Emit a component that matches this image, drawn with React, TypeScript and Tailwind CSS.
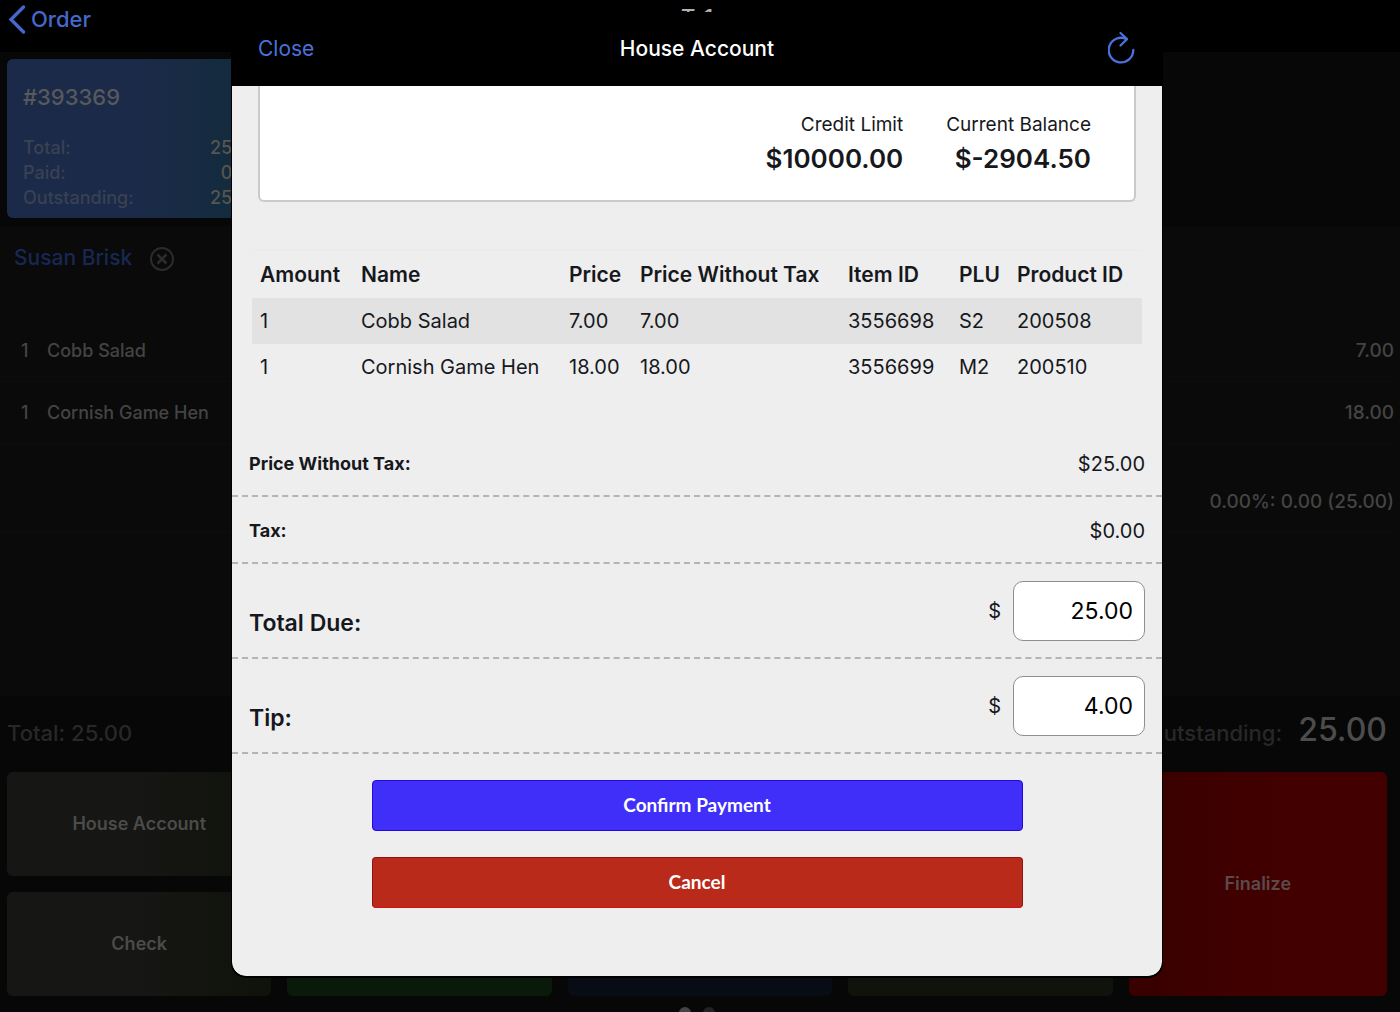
import { useState } from "react";

type OrderItem = {
  amount: number;
  name: string;
  price: string;
  priceWithoutTax: string;
  itemId: string;
  plu: string;
  productId: string;
};

const items: OrderItem[] = [
  {
    amount: 1,
    name: "Cobb Salad",
    price: "7.00",
    priceWithoutTax: "7.00",
    itemId: "3556698",
    plu: "S2",
    productId: "200508",
  },
  {
    amount: 1,
    name: "Cornish Game Hen",
    price: "18.00",
    priceWithoutTax: "18.00",
    itemId: "3556699",
    plu: "M2",
    productId: "200510",
  },
];

const card_totals = [
  { label: "Total:", value: "25.00" },
  { label: "Paid:", value: "0.00" },
  { label: "Outstanding:", value: "25.00" },
];

const columns = [
  { label: "Amount", width: "w-[101px]" },
  { label: "Name", width: "w-[208px]" },
  { label: "Price", width: "w-[71px]" },
  { label: "Price Without Tax", width: "w-[208px]" },
  { label: "Item ID", width: "w-[111px]" },
  { label: "PLU", width: "w-[58px]" },
  { label: "Product ID", width: "" },
];

const BackIcon = () => (
  <svg width="18" height="30" viewBox="0 0 18 30" fill="none" aria-hidden="true">
    <path
      d="M15.5 3 3 15.500l12.500 12.500"
      stroke="currentColor"
      strokeWidth="3.4"
      strokeLinecap="round"
      strokeLinejoin="miter"
    />
  </svg>
);

const ReloadIcon = () => (
  <svg width="28" height="36" viewBox="0 -2 28 36" fill="none" aria-hidden="true">
    <g
      stroke="currentColor"
      strokeWidth="2.3"
      strokeLinecap="round"
      strokeLinejoin="round"
    >
      <path d="M25.3 17A12.300 12.300 0 1 1 18.500 6.100" />
      <path d="M12.500 0 19 6.200 12.500 12.500" />
    </g>
  </svg>
);

const RemoveIcon = () => (
  <svg width="24" height="24" viewBox="0 0 24 24" fill="none" aria-hidden="true">
    <g stroke="currentColor" strokeWidth="2">
      <circle cx="12" cy="12" r="11" />
      <path d="m7.500 7.500 9 9m0-9-9 9" strokeWidth="2.500" />
    </g>
  </svg>
);

const OrderScreen = () => {
  return (
    <div className="min-h-screen w-full flex flex-col pr-1.5 font-medium">
      <header className="h-13 relative flex items-start justify-center">
        <a
          href="#order"
          className="absolute left-2 top-1 flex items-center gap-[5px] text-[22px] leading-[30px] text-[#4468cc]"
        >
          <BackIcon />
          Order
        </a>
        <span className="text-[22px] leading-[30px] pt-0.5 text-[#b0b0b0]">
          T-1
        </span>
      </header>

      {/* Order card */}
      <div className="bg-[#070707] h-[174px] px-[7px] pt-[7px] -mr-1.5">
        <div className="w-[264px] h-[159px] rounded-md pl-4 pr-[11px] pt-[23px] bg-linear-to-r from-[#1a2a48] from-50% to-[#112b38] text-[#3a4153]">
          <p className="text-[22px] leading-[30px] text-[#58595c]">#393369</p>
          <dl className="mt-[23px] text-lg leading-[25px]">
            {card_totals.map((item) => (
              <div key={item.label} className="flex justify-between">
                <dt>{item.label}</dt>
                <dd className="text-[#55564f]">{item.value}</dd>
              </div>
            ))}
          </dl>
        </div>
      </div>

      {/* Order lines */}
      <div className="flex-1 bg-[#0a0a0a] -mr-1.5 pr-1.5 text-[#444444] text-lg">
        <div className="h-[66px] px-3.5 flex items-center gap-[18px] border-b border-[#0c0c0c]">
          <a href="#customer" className="text-[21px] text-[#182852]">
            Susan Brisk
          </a>
          <button type="button" aria-label="Remove customer" className="text-[#2c2c2c]">
            <RemoveIcon />
          </button>
        </div>
        <ul className="pt-7">
          {items.map((item) => (
            <li
              key={item.itemId}
              className="h-[62px] flex items-center border-b border-[#0d0d0d]"
            >
              <span className="w-[47px] pl-[21px]">{item.amount}</span>
              <span className="flex-1">{item.name}</span>
              <span className="text-[19px]">{item.price}</span>
            </li>
          ))}
        </ul>
        <p className="h-[88px] pt-7 flex items-center justify-end border-b border-[#0d0d0d] text-[19px]">
          0.00%: 0.00 (25.00)
        </p>
      </div>

      {/* Totals and payment buttons */}
      <footer className="bg-[#060706] -mr-1.5 pr-[13px] pl-[7px]">
        <div className="h-[76px] pt-3.5 flex items-baseline justify-between text-[22px] text-[#282828]">
          <p>Total: 25.00</p>
          <p className="flex items-baseline gap-4">
            Outstanding:
            <span className="text-[32px] leading-10 text-[#4c4c4c]">25.00</span>
          </p>
        </div>
        <div className="grid grid-cols-[repeat(4,minmax(0,264fr))_minmax(0,258fr)] grid-rows-[104px_104px] gap-4 text-lg font-semibold text-[#4b4b4b]">
          <button type="button" className="rounded-md bg-linear-to-r from-[#161614] from-50% to-[#0f120a]">
            House Account
          </button>
          <button type="button" aria-label="Cash" className="rounded-md row-span-2 bg-[#0a1a0a]" />
          <button type="button" aria-label="Card" className="rounded-md row-span-2 bg-[#080c14]" />
          <button type="button" aria-label="Other" className="rounded-md row-span-2 bg-[#10120c]" />
          <button
            type="button"
            className="rounded-md row-span-2 bg-linear-to-r from-[#380000] to-[#420000] to-60% text-[#5c4a4a]"
          >
            Finalize
          </button>
          <button type="button" className="rounded-md bg-linear-to-r from-[#161614] from-50% to-[#0f120a]">
            Check
          </button>
        </div>
        <div className="h-4 pt-[11px] flex justify-center gap-3 overflow-hidden">
          <span className="size-3 shrink-0 rounded-full bg-[#444444]" />
          <span className="size-3 shrink-0 rounded-full bg-[#222222]" />
        </div>
      </footer>
    </div>
  );
};

type AmountRowProps = {
  id: string;
  label: string;
  value: string;
  onChange: (value: string) => void;
};

const AmountRow = ({ id, label, value, onChange }: AmountRowProps) => (
  <div className="px-[17px] pt-[17px] pb-4 flex items-center justify-between border-b-2 border-dashed border-[#b4b4b4]">
    <label htmlFor={id} className="pt-6 text-[23px] leading-8 font-semibold">
      {label}
    </label>
    <div className="flex items-center gap-3 text-xl">
      <span>$</span>
      <input
        id={id}
        type="text"
        inputMode="decimal"
        value={value}
        onChange={(e) => onChange(e.target.value)}
        className="w-[132px] h-[60px] px-[11px] text-right text-[23px] text-black bg-white border border-[#8e8e93] rounded-[10px]"
      />
    </div>
  </div>
);

const HouseAccountDialog = () => {
  const [total, setTotal] = useState("25.00");
  const [tip, setTip] = useState("4.00");

  return (
    <div
      role="dialog"
      aria-labelledby="dialog-title"
      className="w-full max-w-[930px] rounded-[14px] overflow-hidden bg-black text-[#16181d] shadow-[0_1px_0_1px_#000]"
    >
      <div className="h-[74px] px-[26px] grid grid-cols-3 items-center text-[21px]">
        <button type="button" className="justify-self-start text-[#4a72dc]">
          Close
        </button>
        <h1 id="dialog-title" className="justify-self-center font-medium text-white">
          House Account
        </h1>
        <button
          type="button"
          aria-label="Reload"
          className="justify-self-end text-[#4a72dc]"
        >
          <ReloadIcon />
        </button>
      </div>

      <div className="bg-[#eeeeee] rounded-b-[14px]">
        {/* Balance */}
        <div className="px-[26px]">
          <div className="h-[116px] pr-[43px] pt-[25px] flex justify-end gap-[43px] text-right bg-white border-2 border-t-0 border-[#cacaca] rounded-b-md">
            <div>
              <p className="text-[19px] leading-7">Credit Limit</p>
              <p className="text-[26px] leading-10 font-semibold">$10000.00</p>
            </div>
            <div>
              <p className="text-[19px] leading-7">Current Balance</p>
              <p className="text-[26px] leading-10 font-semibold">$-2904.50</p>
            </div>
          </div>
        </div>

        {/* Items */}
        <div className="px-5 pt-12">
          <table className="w-full table-fixed text-left text-xl border-t border-[#eaeaea]">
            <thead>
              <tr className="h-[47px] text-[21px]">
                {columns.map((column) => (
                  <th
                    key={column.label}
                    className={`${column.width} pl-2 font-semibold whitespace-nowrap`}
                  >
                    {column.label}
                  </th>
                ))}
              </tr>
            </thead>
            <tbody>
              {items.map((item) => (
                <tr key={item.itemId} className="h-[46px] odd:bg-[#e2e2e2] whitespace-nowrap">
                  <td className="pl-2">{item.amount}</td>
                  <td className="pl-2">{item.name}</td>
                  <td className="pl-2">{item.price}</td>
                  <td className="pl-2">{item.priceWithoutTax}</td>
                  <td className="pl-2">{item.itemId}</td>
                  <td className="pl-2">{item.plu}</td>
                  <td className="pl-2">{item.productId}</td>
                </tr>
              ))}
            </tbody>
          </table>
        </div>

        {/* Amounts */}
        <div className="pt-10">
          <div className="h-[67px] px-[17px] pt-1 flex items-center justify-between border-b-2 border-dashed border-[#b4b4b4]">
            <span className="text-lg font-bold">Price Without Tax:</span>
            <span className="text-xl">$25.00</span>
          </div>
          <div className="h-[67px] px-[17px] pt-1 flex items-center justify-between border-b-2 border-dashed border-[#b4b4b4]">
            <span className="text-lg font-bold">Tax:</span>
            <span className="text-xl">$0.00</span>
          </div>
          <AmountRow id="total-due" label="Total Due:" value={total} onChange={setTotal} />
          <AmountRow id="tip" label="Tip:" value={tip} onChange={setTip} />
        </div>

        <div className="pt-[26px] pb-[68px] flex flex-col items-center gap-[26px] font-['Lato',sans-serif] text-[19px] font-bold text-white">
          <button type="button" className="w-[70%] h-[51px] rounded-[4px] bg-[#402ff8] border border-[#2408e0]">
            Confirm Payment
          </button>
          <button type="button" className="w-[70%] h-[51px] rounded-[4px] bg-[#ba2a1a] border border-[#981010] border-b-[#dc0a0a]">
            Cancel
          </button>
        </div>
      </div>
    </div>
  );
};

const App = () => {
  return (
    <div className="bg-black font-['Inter',sans-serif]">
      <OrderScreen />
      <div className="absolute inset-0 pt-3 pr-1.5 flex justify-center items-start">
        <HouseAccountDialog />
      </div>
    </div>
  );
};

export default App;
